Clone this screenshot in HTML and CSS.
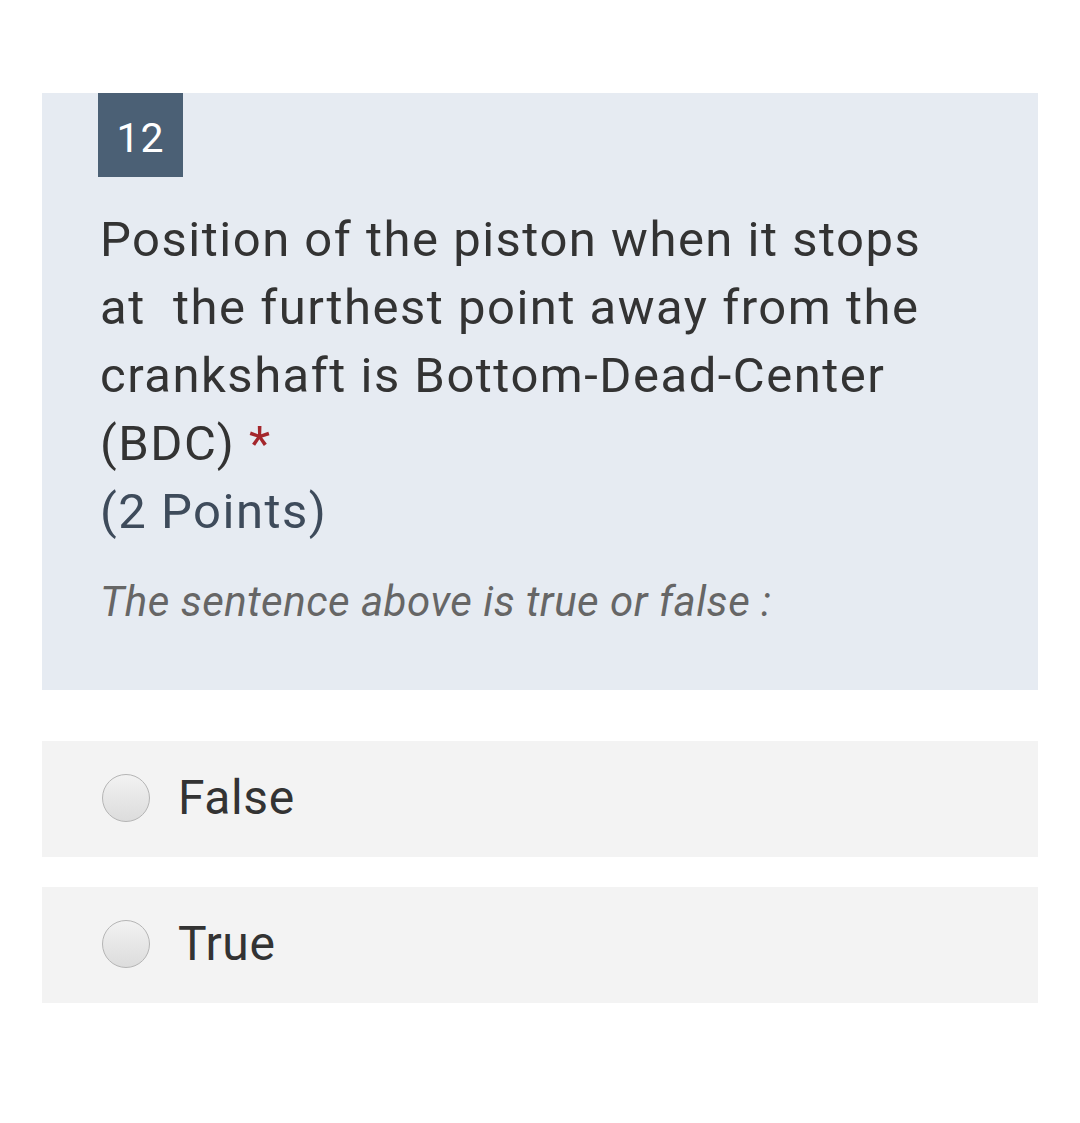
FILE: index.html
```html
<!DOCTYPE html>
<html>
<head>
<meta charset="utf-8">
<link rel="stylesheet" href="styles.css">
</head>
<body>
<div class="page">
  <section class="question">
    <div class="badge">12</div>
    <div class="title">Position of the piston when it stops at&nbsp; the furthest point away from the crankshaft is Bottom-Dead-Center (BDC) <span class="req">*</span></div>
    <div class="points">(2 Points)</div>
    <div class="subtitle">The sentence above is true or false :</div>
  </section>
  <div class="options">
    <label class="option"><span class="radio"></span><span class="opt-text">False</span></label>
    <label class="option"><span class="radio"></span><span class="opt-text">True</span></label>
  </div>
</div>
</body>
</html>
```
FILE: styles.css
```css
html, body {
  margin: 0;
  padding: 0;
  background: #ffffff;
}
body {
  font-family: Roboto, "Noto Sans", sans-serif;
  color: #333333;
}
.page {
  padding: 93px 42px 0 42px;
}
.question {
  background: #e6ebf2;
  padding: 0 90px 63px 56px;
}
.badge {
  width: 85px;
  height: 84px;
  box-sizing: border-box;
  padding-top: 6px;
  background: #4b6075;
  color: #ffffff;
  font-size: 41px;
  letter-spacing: 1px;
  display: flex;
  align-items: center;
  justify-content: center;
}
.title {
  margin-top: 29px;
  font-size: 49px;
  letter-spacing: 1.5px;
  line-height: 68px;
  color: #333333;
  padding-left: 2px;
}
.req {
  color: #a4262c;
  letter-spacing: 0;
}
.points {
  font-size: 49px;
  letter-spacing: 1.5px;
  line-height: 68px;
  color: #3e4b5b;
  padding-left: 2px;
}
.subtitle {
  margin-top: 31px;
  font-size: 42px;
  letter-spacing: 0.5px;
  line-height: 50px;
  font-style: italic;
  color: #666666;
  padding-left: 2px;
}
.options {
  margin-top: 51px;
  display: flex;
  flex-direction: column;
  gap: 30px;
}
.option {
  background: #f3f3f3;
  height: 116px;
  display: flex;
  align-items: center;
  padding-left: 60px;
}
.radio {
  width: 48px;
  height: 48px;
  margin-top: -2px;
  border-radius: 50%;
  border: 1px solid #b5b5b5;
  background: linear-gradient(#f2f2f2, #dcdcdc);
  box-sizing: border-box;
  flex: none;
}
.opt-text {
  margin-left: 28px;
  margin-top: -4px;
  font-size: 48px;
  letter-spacing: 0.6px;
  color: #333333;
}
```
